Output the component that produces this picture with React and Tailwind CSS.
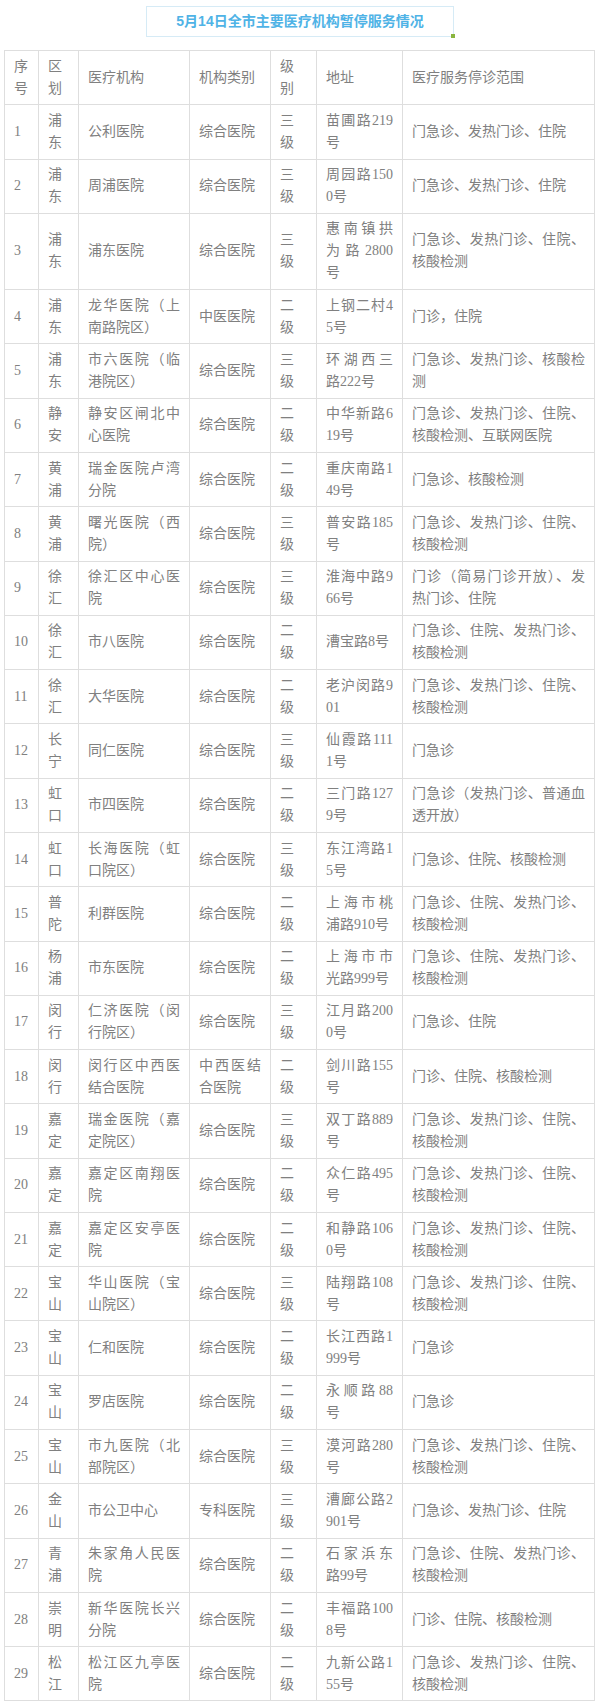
const rows = [
  ["1", "浦东", "公利医院", "综合医院", "三级", "苗圃路219号", "门急诊、发热门诊、住院"],
  ["2", "浦东", "周浦医院", "综合医院", "三级", "周园路1500号", "门急诊、发热门诊、住院"],
  ["3", "浦东", "浦东医院", "综合医院", "三级", "惠南镇拱为路2800号", "门急诊、发热门诊、住院、核酸检测"],
  ["4", "浦东", "龙华医院（上南路院区）", "中医医院", "二级", "上钢二村45号", "门诊，住院"],
  ["5", "浦东", "市六医院（临港院区）", "综合医院", "三级", "环湖西三路222号", "门急诊、发热门诊、核酸检测"],
  ["6", "静安", "静安区闸北中心医院", "综合医院", "二级", "中华新路619号", "门急诊、发热门诊、住院、核酸检测、互联网医院"],
  ["7", "黄浦", "瑞金医院卢湾分院", "综合医院", "二级", "重庆南路149号", "门急诊、核酸检测"],
  ["8", "黄浦", "曙光医院（西院）", "综合医院", "三级", "普安路185号", "门急诊、发热门诊、住院、核酸检测"],
  ["9", "徐汇", "徐汇区中心医院", "综合医院", "三级", "淮海中路966号", "门诊（简易门诊开放）、发热门诊、住院"],
  ["10", "徐汇", "市八医院", "综合医院", "二级", "漕宝路8号", "门急诊、住院、发热门诊、核酸检测"],
  ["11", "徐汇", "大华医院", "综合医院", "二级", "老沪闵路901", "门急诊、发热门诊、住院、核酸检测"],
  ["12", "长宁", "同仁医院", "综合医院", "三级", "仙霞路1111号", "门急诊"],
  ["13", "虹口", "市四医院", "综合医院", "二级", "三门路1279号", "门急诊（发热门诊、普通血透开放）"],
  ["14", "虹口", "长海医院（虹口院区）", "综合医院", "三级", "东江湾路15号", "门急诊、住院、核酸检测"],
  ["15", "普陀", "利群医院", "综合医院", "二级", "上海市桃浦路910号", "门急诊、住院、发热门诊、核酸检测"],
  ["16", "杨浦", "市东医院", "综合医院", "二级", "上海市市光路999号", "门急诊、住院、发热门诊、核酸检测"],
  ["17", "闵行", "仁济医院（闵行院区）", "综合医院", "三级", "江月路2000号", "门急诊、住院"],
  ["18", "闵行", "闵行区中西医结合医院", "中西医结合医院", "二级", "剑川路155号", "门诊、住院、核酸检测"],
  ["19", "嘉定", "瑞金医院（嘉定院区）", "综合医院", "三级", "双丁路889号", "门急诊、发热门诊、住院、核酸检测"],
  ["20", "嘉定", "嘉定区南翔医院", "综合医院", "二级", "众仁路495号", "门急诊、发热门诊、住院、核酸检测"],
  ["21", "嘉定", "嘉定区安亭医院", "综合医院", "二级", "和静路1060号", "门急诊、发热门诊、住院、核酸检测"],
  ["22", "宝山", "华山医院（宝山院区）", "综合医院", "三级", "陆翔路108号", "门急诊、发热门诊、住院、核酸检测"],
  ["23", "宝山", "仁和医院", "综合医院", "二级", "长江西路1999号", "门急诊"],
  ["24", "宝山", "罗店医院", "综合医院", "二级", "永顺路88号", "门急诊"],
  ["25", "宝山", "市九医院（北部院区）", "综合医院", "三级", "漠河路280号", "门急诊、发热门诊、住院、核酸检测"],
  ["26", "金山", "市公卫中心", "专科医院", "三级", "漕廊公路2901号", "门急诊、发热门诊、住院"],
  ["27", "青浦", "朱家角人民医院", "综合医院", "二级", "石家浜东路99号", "门急诊、住院、发热门诊、核酸检测"],
  ["28", "崇明", "新华医院长兴分院", "综合医院", "二级", "丰福路1008号", "门诊、住院、核酸检测"],
  ["29", "松江", "松江区九亭医院", "综合医院", "二级", "九新公路155号", "门急诊、发热门诊、住院、核酸检测"],
];

const head = ["序号", "区划", "医疗机构", "机构类别", "级别", "地址", "医疗服务停诊范围"];

const cell =
  "border border-[#dedede] px-[9px] py-[4.65px] align-middle leading-[22px] text-[14px] text-justify break-all text-[#808080] font-normal";

export default function App() {
  return (
    <div className="w-[600px] bg-white pb-[4px] font-['Liberation_Serif','Noto_Sans_CJK_SC',serif]">
      {/* title box */}
      <div className="flex justify-center pt-[6px]">
        <div className="relative flex h-[31px] w-[308px] items-center justify-center border border-[#d6ebf6]">
          <span className="text-[14px] font-bold text-[#4fb3e6] font-['Liberation_Sans','Noto_Sans_CJK_SC',sans-serif]">
            5月14日全市主要医疗机构暂停服务情况
          </span>
          <span className="absolute -bottom-[2px] -right-[2px] h-[4px] w-[4px] bg-[#8ab53f]" />
        </div>
      </div>

      <table className="ml-[4px] mt-[13px] w-[590px] table-fixed border-collapse border border-[#dedede]">
        <colgroup>
          <col className="w-[34px]" />
          <col className="w-[40px]" />
          <col className="w-[111px]" />
          <col className="w-[81px]" />
          <col className="w-[46px]" />
          <col className="w-[86px]" />
          <col className="w-[192px]" />
        </colgroup>
        <thead>
          <tr>
            {head.map((h) => (
              <th key={h} className={cell}>
                {h}
              </th>
            ))}
          </tr>
        </thead>
        <tbody>
          {rows.map((r) => (
            <tr key={r[0]}>
              {r.map((c, i) => (
                <td key={i} className={cell}>
                  {c}
                </td>
              ))}
            </tr>
          ))}
        </tbody>
      </table>
    </div>
  );
}
